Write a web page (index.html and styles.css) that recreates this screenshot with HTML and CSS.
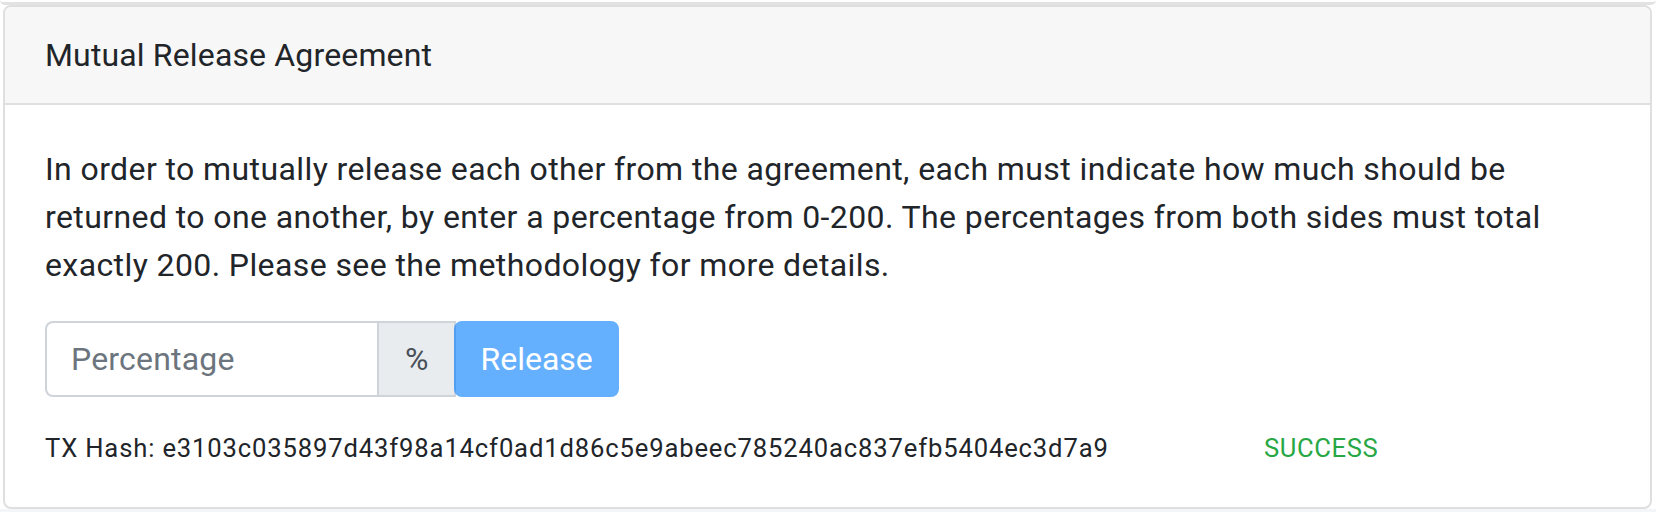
FILE: index.html
```html
<!DOCTYPE html>
<html>
<head>
<meta charset="utf-8">
<link rel="stylesheet" href="styles.css">
</head>
<body>
<div class="page">
  <div class="prev-card"></div>
  <div class="card">
    <div class="card-header">Mutual Release Agreement</div>
    <div class="card-body">
      <p class="intro">In order to mutually release each other from the agreement, each must indicate how much should be returned to one another, by enter a percentage from 0-200. The percentages from both sides must total exactly 200. Please see the methodology for more details.</p>
      <div class="form-row">
        <div class="input-group">
          <input class="form-control" type="text" placeholder="Percentage">
          <span class="input-group-text">%</span>
        </div>
        <button class="btn-release" disabled>Release</button>
      </div>
      <div class="tx-row">
        <div class="tx-hash">TX Hash: e3103c035897d43f98a14cf0ad1d86c5e9abeec785240ac837efb5404ec3d7a9</div>
        <div class="tx-status">SUCCESS</div>
      </div>
    </div>
  </div>
  <div class="bottom-strip"></div>
</div>
</body>
</html>
```
FILE: styles.css
```css
* { box-sizing: border-box; }
html, body { margin: 0; padding: 0; background: #fff; }
body {
  font-family: Roboto, "Liberation Sans", sans-serif;
  color: #212529;
  font-size: 32px;
  line-height: 48px;
}
.page { padding: 0 4px 0 3px; }
.prev-card {
  height: 5px;
  margin: 0 -4px 0 -3px;
  border-bottom: 3px solid #e2e2e2;
  border-radius: 0 0 8px 8px;
}
.card {
  border: 2px solid #dfdfdf;
  border-radius: 8px;
  background: #fff;
  overflow: hidden;
}
.card-header {
  background: #f7f7f7;
  border-bottom: 2px solid #dfdfdf;
  padding: 24px 40px;
  font-size: 32px;
  line-height: 48px;
  letter-spacing: 0.15px;
}
.card-body { padding: 40px; }
.intro { margin: 0 0 32px 0; letter-spacing: 0.4px; }
.form-row { display: flex; align-items: stretch; }
.input-group { display: flex; }
.form-control {
  width: 332px;
  height: 76px;
  padding: 12px 24px;
  font-family: inherit;
  font-size: 32px;
  line-height: 48px;
  color: #495057;
  border: 2px solid #ced4da;
  border-right: none;
  border-radius: 8px 0 0 8px;
  outline: none;
  margin: 0;
  letter-spacing: 0.2px;
}
.form-control::placeholder { color: #6c757d; opacity: 1; }
.input-group-text {
  display: flex;
  align-items: center;
  height: 76px;
  padding: 12px 26px;
  background: #e9ecef;
  border: 2px solid #ced4da;
  color: #495057;
  font-size: 32px;
}
.btn-release {
  height: 76px;
  padding: 12px 24px;
  font-family: inherit;
  font-size: 32px;
  line-height: 48px;
  color: #fff;
  background: #007bff;
  border: 2px solid #007bff;
  border-radius: 8px;
  opacity: 0.6;
  margin: 0 0 0 -2px;
}
.tx-row {
  display: grid;
  grid-template-columns: 1219px 1fr;
  margin-top: 32px;
  font-size: 25.6px;
  line-height: 38px;
}
.tx-hash { letter-spacing: 0.86px; }
.tx-status { color: #28a745; letter-spacing: 0.6px; }
.bottom-strip { height: 8px; background: #f4f5f7; margin: 0 -4px 0 -3px; }
```
